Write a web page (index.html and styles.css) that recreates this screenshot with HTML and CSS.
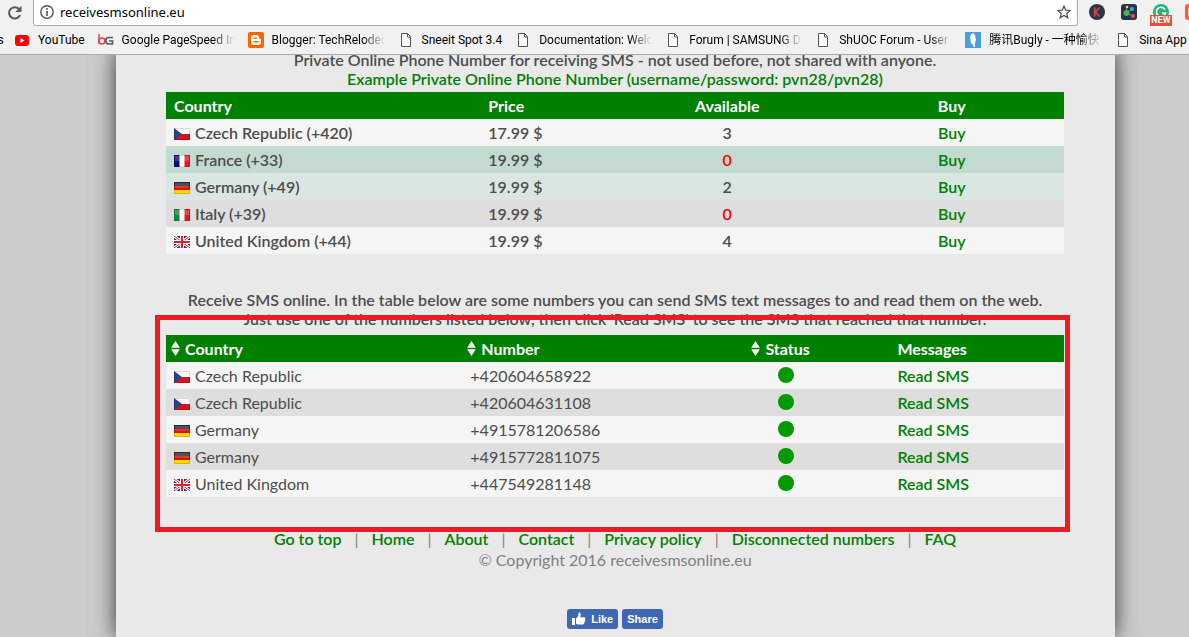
FILE: index.html
```html
<!DOCTYPE html>
<html lang="en">
<head>
    <meta charset="UTF-8">
    <meta name="viewport" content="width=device-width, initial-scale=1.0">
    <title>Receive SMS online</title>
    <link rel="stylesheet" href="styles.css">
</head>
<body>
    <!-- shared icons -->
    <svg class="sprite" aria-hidden="true">
        <symbol id="doc" viewBox="0 0 16 16">
            <path d="M3.500 1.500h6l3 3v10h-9z" fill="#fff" stroke="#555"/>
            <path d="M9.500 1.500v3.500h3" fill="none" stroke="#555"/>
        </symbol>
        <symbol id="sort" viewBox="0 0 9 15">
            <path d="M4.500 0L8.800 6.800H.2zM4.500 15L8.800 8.200H.2z" fill="#fff"/>
        </symbol>
        <symbol id="cz" viewBox="0 0 16 12">
            <path fill="#fff" d="M0 0h16v6H0z"/>
            <path fill="#d7141a" d="M0 6h16v6H0z"/>
            <path fill="#24458c" d="M0 0l8 6-8 6z"/>
            <path fill="none" stroke="#000" stroke-opacity=".15" d="M.5.5h15v11H.5z"/>
        </symbol>
        <symbol id="fr" viewBox="0 0 16 12">
            <path fill="#fff" d="M0 0h16v12H0z"/>
            <path fill="#0a0f78" d="M0 0h5.500v12H0z"/>
            <path fill="#de1c2c" d="M10.500 0H16v12h-5.500z"/>
            <path fill="#fff" fill-opacity=".2" d="M1 1h14v5H1z"/>
            <path fill="none" stroke="#000" stroke-opacity=".15" d="M.5.5h15v11H.5z"/>
        </symbol>
        <symbol id="de" viewBox="0 0 16 12">
            <path fill="#333" d="M0 0h16v4H0z"/>
            <path fill="#e00d0d" d="M0 4h16v4H0z"/>
            <path fill="#ffd800" d="M0 8h16v4H0z"/>
            <path fill="#fff" fill-opacity=".15" d="M1 1h14v5H1z"/>
            <path fill="none" stroke="#000" stroke-opacity=".15" d="M.5.5h15v11H.5z"/>
        </symbol>
        <symbol id="it" viewBox="0 0 16 12">
            <path fill="#fff" d="M0 0h16v12H0z"/>
            <path fill="#12883f" d="M0 0h5.500v12H0z"/>
            <path fill="#de1c22" d="M10.500 0H16v12h-5.500z"/>
            <path fill="#fff" fill-opacity=".2" d="M1 1h14v5H1z"/>
            <path fill="none" stroke="#000" stroke-opacity=".15" d="M.5.5h15v11H.5z"/>
        </symbol>
        <symbol id="gb" viewBox="0 0 16 12">
            <path fill="#25317e" d="M0 0h16v12H0z"/>
            <path stroke="#fff" stroke-width="3" d="M0 0l16 12M16 0L0 12"/>
            <path stroke="#d8232a" d="M0 0l16 12M16 0L0 12"/>
            <path stroke="#fff" stroke-width="4" d="M8 0v12M0 6h16"/>
            <path stroke="#d8232a" stroke-width="2" d="M8 0v12M0 6h16"/>
        </symbol>
    </svg>

    <header class="browser">
        <div class="toolbar">
            <button class="icon-btn reload" aria-label="Reload">
                <svg width="16" height="16" viewBox="0 0 16 16"><path d="M13 10.200A5.700 5.700 0 1 1 12 4" fill="none" stroke="#5a5a5a" stroke-width="2"/><path d="M14.500.8v6.200H8.300z" fill="#5a5a5a"/></svg>
            </button>
            <div class="address">
                <svg width="14" height="14" viewBox="0 0 14 14"><circle cx="7" cy="7" r="6.200" fill="none" stroke="#555" stroke-width="1.400"/><path d="M6.200 6h1.600v5H6.200zM6.200 3h1.600v1.700H6.200z" fill="#555"/></svg>
                <input type="text" aria-label="Address" value="receivesmsonline.eu">
                <button class="icon-btn" aria-label="Bookmark this page">
                    <svg width="14" height="14" viewBox="0 0 14 14"><path d="M7 1l1.700 4.200 4.500.3-3.500 2.900 1.100 4.400L7 10.400l-3.800 2.400 1.100-4.400L.8 5.500l4.500-.3z" fill="none" stroke="#555" stroke-width="1.300"/></svg>
                </button>
            </div>
            <div class="extensions">
                <svg width="16" height="16" viewBox="0 0 16 16"><circle cx="8" cy="8" r="8" fill="#24384a"/><path d="M5.700 3.500v9M10.500 3.500L6.500 8l4 4.500" fill="none" stroke="#e0433c" stroke-width="1.700"/></svg>
                <svg width="16" height="16" viewBox="0 0 16 16"><rect width="16" height="16" rx="3" fill="#26364a"/><path d="M6 3l-1 6 6-4M5 9l7 3" stroke="#9aa" stroke-width=".7" fill="none"/><circle cx="5.500" cy="9" r="3" fill="#4fb04f"/><circle cx="6" cy="3" r="1.300" fill="#ffe100"/><circle cx="11" cy="5" r="2" fill="#39a9e8"/><circle cx="12" cy="12" r="2" fill="#f04e45"/></svg>
                <span class="ext-new">
                    <svg width="16" height="16" viewBox="0 0 16 16"><circle cx="8" cy="8" r="8" fill="#1fb573"/><path d="M12 5.500A4.600 4.600 0 1 0 12.500 9H9" fill="none" stroke="#fff" stroke-width="1.700"/></svg>
                    <b>NEW</b>
                </span>
                <svg width="16" height="16" viewBox="0 0 16 16"><rect width="16" height="16" rx="3" fill="#ff5a43"/><path d="M9 5H4v6h5" fill="none" stroke="#fff" stroke-width="1.500"/></svg>
            </div>
        </div>
        <nav class="bookmarks">
            <a href="#" class="bookmark first"><span>s</span></a>
            <a href="#" class="bookmark"><svg width="16" height="16" viewBox="0 0 16 16"><rect x="1" y="3" width="14" height="11" rx="3" fill="#f00"/><path d="M6.500 6v5l4-2.500z" fill="#fff"/></svg><span>YouTube</span></a>
            <a href="#" class="bookmark"><svg width="16" height="16" viewBox="0 0 16 16"><path d="M1 2v10" stroke="#e2444b" stroke-width="1.500"/><circle cx="4" cy="9" r="3" fill="none" stroke="#e2444b" stroke-width="1.500"/><path d="M15 5.500h-4a3 3 0 0 0 0 6.500h3.500V9H11" fill="none" stroke="#4d5c6d" stroke-width="1.700"/></svg><span class="cut">Google PageSpeed In</span></a>
            <a href="#" class="bookmark"><svg width="16" height="16" viewBox="0 0 16 16"><rect width="16" height="16" rx="2" fill="#ff6600"/><path d="M6 3h2.500A2.500 2.500 0 0 1 11 5.500c0 1 .5 1.300 2 1.500v3a3 3 0 0 1-3 3H6a3 3 0 0 1-3-3V6a3 3 0 0 1 3-3z" fill="#fff"/><path d="M6 6.200h2.200M6 9.800h4" stroke="#ff6600" stroke-width="1.400" stroke-linecap="round"/></svg><span class="cut">Blogger: TechReloded</span></a>
            <a href="#" class="bookmark"><svg width="16" height="16"><use href="#doc"/></svg><span>Sneeit Spot 3.4</span></a>
            <a href="#" class="bookmark"><svg width="16" height="16"><use href="#doc"/></svg><span class="cut">Documentation: Welc</span></a>
            <a href="#" class="bookmark"><svg width="16" height="16"><use href="#doc"/></svg><span class="cut">Forum | SAMSUNG D</span></a>
            <a href="#" class="bookmark"><svg width="16" height="16"><use href="#doc"/></svg><span class="cut">ShUOC Forum - User</span></a>
            <a href="#" class="bookmark"><svg width="16" height="16" viewBox="0 0 16 16"><rect width="16" height="16" rx="1" fill="#4a9de0"/><path d="M8 1l2 2 1 5-1 3v4H8.500l-.5-4-.5 2L6 11 5 5l1-2.500z" fill="#fff"/></svg><span class="cut">腾讯Bugly - 一种愉快</span></a>
            <a href="#" class="bookmark"><svg width="16" height="16"><use href="#doc"/></svg><span>Sina App E</span></a>
        </nav>
    </header>

    <main class="page">
        <p class="intro">Private Online Phone Number for receiving SMS - not used before, not shared with anyone.<br>
            <a href="#">Example Private Online Phone Number (username/password: pvn28/pvn28)</a></p>

        <table class="numbers prices">
            <thead>
                <tr><th class="w-35">Country</th><th class="w-15">Price</th><th class="w-25 center">Available</th><th class="w-25 center">Buy</th></tr>
            </thead>
            <tbody>
                <tr><td><svg class="flag"><use href="#cz"/></svg>Czech Republic (+420)</td><td>17.99 $</td><td class="center">3</td><td class="center"><a href="#">Buy</a></td></tr>
                <tr class="hover"><td><svg class="flag"><use href="#fr"/></svg>France (+33)</td><td>19.99 $</td><td class="center none">0</td><td class="center"><a href="#">Buy</a></td></tr>
                <tr class="fading"><td><svg class="flag"><use href="#de"/></svg>Germany (+49)</td><td>19.99 $</td><td class="center">2</td><td class="center"><a href="#">Buy</a></td></tr>
                <tr><td><svg class="flag"><use href="#it"/></svg>Italy (+39)</td><td>19.99 $</td><td class="center none">0</td><td class="center"><a href="#">Buy</a></td></tr>
                <tr><td><svg class="flag"><use href="#gb"/></svg>United Kingdom (+44)</td><td>19.99 $</td><td class="center">4</td><td class="center"><a href="#">Buy</a></td></tr>
            </tbody>
        </table>

        <p class="intro second">Receive SMS online. In the table below are some numbers you can send SMS text messages to and read them on the web.<br>
            Just use one of the numbers listed below, then click 'Read SMS' to see the SMS that reached that number.</p>

        <div class="public">
            <table class="numbers">
                <thead>
                    <tr>
                        <th class="w-33 sortable"><button><svg class="sort"><use href="#sort"/></svg>Country</button></th>
                        <th class="w-25 sortable"><button><svg class="sort"><use href="#sort"/></svg>Number</button></th>
                        <th class="w-22 sortable center"><button><svg class="sort"><use href="#sort"/></svg>Status</button></th>
                        <th class="messages">Messages</th>
                    </tr>
                </thead>
                <tbody>
                    <tr><td><svg class="flag"><use href="#cz"/></svg>Czech Republic</td><td>+420604658922</td><td class="center"><i class="online"></i></td><td class="messages"><a href="#">Read SMS</a></td></tr>
                    <tr><td><svg class="flag"><use href="#cz"/></svg>Czech Republic</td><td>+420604631108</td><td class="center"><i class="online"></i></td><td class="messages"><a href="#">Read SMS</a></td></tr>
                    <tr><td><svg class="flag"><use href="#de"/></svg>Germany</td><td>+4915781206586</td><td class="center"><i class="online"></i></td><td class="messages"><a href="#">Read SMS</a></td></tr>
                    <tr><td><svg class="flag"><use href="#de"/></svg>Germany</td><td>+4915772811075</td><td class="center"><i class="online"></i></td><td class="messages"><a href="#">Read SMS</a></td></tr>
                    <tr><td><svg class="flag"><use href="#gb"/></svg>United Kingdom</td><td>+447549281148</td><td class="center"><i class="online"></i></td><td class="messages"><a href="#">Read SMS</a></td></tr>
                </tbody>
            </table>
            <div class="marker"></div>
        </div>

        <footer class="footer">
            <nav class="links">
                <a href="#">Go to top</a><span>|</span><a href="#">Home</a><span>|</span><a href="#">About</a><span>|</span><a href="#">Contact</a><span>|</span><a href="#">Privacy policy</a><span>|</span><a href="#">Disconnected numbers</a><span>|</span><a href="#">FAQ</a>
            </nav>
            <div>© Copyright 2016 receivesmsonline.eu</div>
            <div class="social">
                <button><svg width="14" height="14" viewBox="0 0 14 14"><path d="M0 6h3v7H0zM4 6.500C6 5 6.500 3.500 6.500 1c0-1 2.300-.8 2.300 1.500 0 1-.3 2-.6 2.700h4c1.300 0 1.500 1.500.7 2 .7.500.5 1.600-.2 1.900.4.700 0 1.500-.6 1.700.3.900-.2 1.700-1.200 1.700H7c-1.300 0-2-.5-3-.8z" fill="#fff"/></svg>Like</button>
                <button>Share</button>
            </div>
        </footer>
    </main>
</body>
</html>
```
FILE: styles.css
```css
* {
    box-sizing: border-box;
}

body {
    margin: 0;
    height: 100vh;
    display: flex;
    flex-direction: column;
    overflow: hidden;
    background: #ccc;
    color: #4d4d4d;
    font-family: Lato, sans-serif;
    font-size: 16px;
}

a {
    color: #008000;
    font-weight: 600;
    text-decoration: none;
}

button {
    font: inherit;
    color: inherit;
    border: none;
    background: none;
    padding: 0;
    cursor: pointer;
}

.sprite {
    position: absolute;
    width: 0;
    height: 0;
}

/* browser bars */
.browser {
    position: relative;
    z-index: 1;
    flex: none;
    background: #f1f1f1;
    border-bottom: 1px solid #aaa;
    color: #000;
    font-family: Roboto, "Noto Sans CJK SC", sans-serif;
    font-size: 12px;
}

.toolbar {
    display: flex;
    height: 26px;
}

.icon-btn {
    display: flex;
    align-items: center;
}

.reload {
    width: 33px;
    padding-left: 7px;
}

.address {
    flex: 1;
    display: flex;
    align-items: center;
    gap: 6px;
    padding: 0 6px 1px;
    background: #fff;
    border: 1px solid #aaa;
    border-top: none;
    border-radius: 0 0 3px 3px;
}

.address input {
    flex: 1;
    padding: 0;
    border: none;
    outline: none;
    font-family: "Noto Sans", sans-serif;
    font-size: 13px;
}

.extensions {
    width: 111px;
    display: flex;
    align-items: center;
    gap: 16px;
    padding: 0 0 2px 11px;
}

.extensions svg {
    flex: none;
    display: block;
}

.ext-new {
    position: relative;
}

.ext-new b {
    position: absolute;
    top: 11px;
    left: -3px;
    width: 22px;
    background: #ea4c3f;
    color: #fff;
    font-size: 9px;
    line-height: 11px;
    text-align: center;
}

.bookmarks {
    display: flex;
    align-items: center;
    gap: 13px;
    height: 28px;
    overflow: hidden;
}

.bookmark {
    flex: none;
    display: flex;
    align-items: center;
    gap: 8px;
    color: #000;
    font-weight: normal;
    line-height: 16px;
    white-space: nowrap;
}

/* scrolled mostly off the left edge */
.first {
    width: 1px;
    justify-content: center;
}

.cut {
    width: 113px;
    overflow: hidden;
    -webkit-mask-image: linear-gradient(to right, #000 80%, transparent);
    mask-image: linear-gradient(to right, #000 80%, transparent);
}

/* site */
.page {
    flex: 1;
    margin: -5px 74px 0 116px;
    padding: 0 51px 0 50px;
    background: #e9e9e9;
    box-shadow: 0 0 20px #333;
}

.intro {
    margin: 0;
    padding-bottom: 4px;
    line-height: 19px;
    font-weight: 600;
    text-align: center;
}

.second {
    padding: 36px 0 7px;
}

.numbers {
    width: 100%;
    table-layout: fixed;
    border-collapse: collapse;
    text-align: left;
    line-height: 27px;
}

.numbers th {
    padding: 0 8px;
    background: #008000;
    color: #fff;
    font-weight: bold;
}

.numbers td {
    padding: 0 8px;
    background: #f5f5f5;
}

.numbers tr:nth-child(even) td {
    background: #dedede;
}

.prices td {
    font-weight: 600;
}

.prices .hover td {
    background: #c3dad0 !important;
}

.prices .fading td {
    background: #d9e6e1;
}

.numbers .center {
    text-align: center;
}

.numbers .none {
    color: #f00;
}

.numbers .sortable {
    padding: 0 15px 0 5px;
}

.numbers .messages {
    padding-left: 13px;
}

.w-15 { width: 15%; }
.w-22 { width: 22%; }
.w-25 { width: 25%; }
.w-33 { width: 33%; }
.w-35 { width: 35%; }

.flag {
    width: 16px;
    height: 12px;
    margin-right: 5px;
    vertical-align: -1px;
}

.sort {
    width: 9px;
    height: 15px;
    margin-right: 5px;
    vertical-align: -1px;
}

.online {
    display: block;
    width: 16px;
    height: 16px;
    margin: 0 auto 2px;
    border-radius: 50%;
    background: #009900;
}

.public {
    position: relative;
}

/* red frame drawn over the second table */
.marker {
    position: absolute;
    top: -20px;
    right: -6px;
    bottom: -35px;
    left: -11px;
    border: 5px solid #ed1c24;
    pointer-events: none;
}

.footer {
    padding-top: 31px;
    line-height: 21px;
    color: #808080;
    text-align: center;
}

.links {
    display: flex;
    justify-content: center;
    gap: 13px;
}

.social {
    display: flex;
    justify-content: center;
    gap: 4px;
    margin-top: 39px;
}

.social button {
    display: flex;
    align-items: center;
    gap: 5px;
    height: 20px;
    padding: 0 5px;
    border-radius: 3px;
    background: #4267b2;
    color: #fff;
    font-family: "Liberation Sans", sans-serif;
    font-size: 11px;
    font-weight: bold;
}
```
